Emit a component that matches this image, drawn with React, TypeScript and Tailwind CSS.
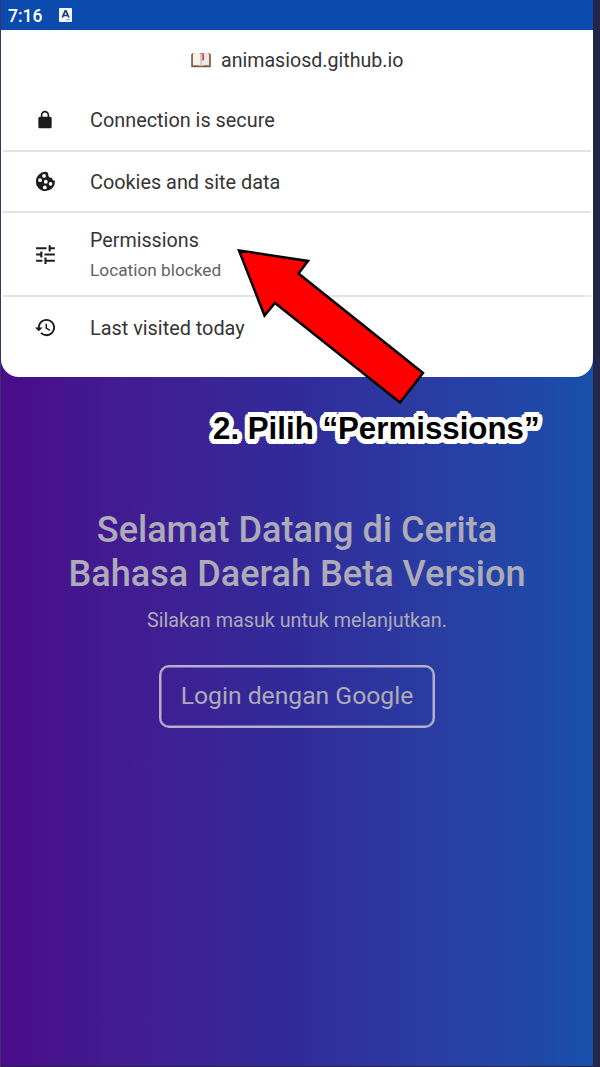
import type { ReactNode } from "react";

const LockIcon = () => (
  <svg viewBox="0 0 24 24" className="mr-[1px] h-[20px] w-[20px]" fill="#1c1c1c">
    <path d="M18 8h-1V6c0-2.76-2.24-5-5-5S7 3.24 7 6v2H6c-1.1 0-2 .9-2 2v10c0 1.1.9 2 2 2h12c1.1 0 2-.9 2-2V10c0-1.1-.9-2-2-2zM8.9 6c0-1.71 1.39-3.1 3.1-3.1s3.1 1.39 3.1 3.1v2H8.9V6z" />
  </svg>
);

const CookieIcon = () => (
  <svg viewBox="0 0 24 24" className="h-[23px] w-[23px]">
    <path
      fill="#1c1c1c"
      d="M21.9 11.2c-1.9.1-3.2-1.1-3-3-2.5.5-4.6-1.3-4-3.9C14.5 3.4 14 2.5 13.6 2.1A10 10 0 1 0 21.9 11.2z"
    />
    <g fill="#fff">
      <circle cx="10.5" cy="6.2" r="2" />
      <circle cx="6.3" cy="10.6" r="2" />
      <circle cx="12.3" cy="12.3" r="2" />
      <circle cx="17.3" cy="14.5" r="1.9" />
      <circle cx="11.3" cy="18.2" r="2" />
    </g>
  </svg>
);

const TuneIcon = () => (
  <svg viewBox="0 0 24 24" className="h-[25px] w-[25px]" fill="#1c1c1c">
    <path d="M3 17v2h6v-2H3zM3 5v2h10V5H3zm10 16v-2h8v-2h-8v-2h-2v6h2zM7 9v2H3v2h4v2h2V9H7zm14 4v-2H11v2h10zm-6-4h2V7h4V5h-4V3h-2v6z" />
  </svg>
);

const HistoryIcon = () => (
  <svg viewBox="0 0 24 24" className="h-[23px] w-[23px]" fill="#1c1c1c">
    <path d="M13 3c-4.970 0-9 4.030-9 9H1l3.890 3.890.07.14L9 12H6c0-3.870 3.130-7 7-7s7 3.130 7 7-3.130 7-7 7c-1.930 0-3.680-.79-4.940-2.060l-1.420 1.420C8.270 19.990 10.510 21 13 21c4.970 0 9-4.030 9-9s-4.030-9-9-9zm-1 5v5l4.280 2.540.72-1.210-3.500-2.080V8H12z" />
  </svg>
);

const BookIcon = () => (
  <svg viewBox="0 0 20 16" className="h-[16px] w-[20px]">
    <path d="M.2 2.2 2 1h16l1.800 1.200v13H.2z" fill="#7f5a3a" />
    <path d="M1.900 1.700C4.500.3 8 .6 10 2v12c-2.500-1-5.500-1-8.100-.4z" fill="#f5f1ec" />
    <path d="M18.100 1.700C15.500.3 12 .6 10 2v12c2.500-1 5.500-1 8.100-.4z" fill="#ece9ec" />
    <path d="M10 2v12" stroke="#a79f9a" strokeWidth=".8" />
    <path d="M11.200 1.500 13.100.9v7.600l-1-.6-.9 1.400z" fill="#dc4b55" />
  </svg>
);

const Row = ({ icon, className, children }: { icon: ReactNode; className: string; children: ReactNode }) => (
  <div className={`flex items-center ${className}`}>
    <div className="flex w-[89px] shrink-0 justify-center">{icon}</div>
    <div className="pt-[2px] text-[19.850px] leading-[26px] text-[#353535]">{children}</div>
  </div>
);

const Divider = () => <div className="mr-[2px] ml-[2px] h-[2px] shrink-0 bg-[#e3e3e3]" />;

export default function App() {
  return (
    <div className="relative flex h-[1067px] w-[600px] overflow-hidden border-l border-[#3d3268] bg-[#25254a] font-['Roboto',sans-serif]">
      <div className="flex h-[1066px] w-[592px] flex-col bg-linear-to-r from-[#4a0b8a] via-[#312b9a] to-[#174fab]">
        <header className="flex h-[30px] shrink-0 items-center bg-[#0a4bad] pl-[7px] text-white">
          <span className="w-[51px] pt-[2px] text-[17.500px] font-medium">7:16</span>
          <svg viewBox="0 0 13 14" className="h-[14px] w-[13px]">
            <rect width="13" height="14" rx="1" fill="#f3f7ff" />
            <path d="M3.300 9.500 6.200 2.800h.8l2.900 6.700M4.300 7.500h4.500" fill="none" stroke="#173e82" strokeWidth="1.700" />
            <path d="M7 11.700h4" stroke="#829bc5" strokeWidth="1" />
          </svg>
        </header>
        <section className="flex h-[347px] shrink-0 flex-col rounded-b-[18px] bg-white">
          <div className="flex h-[59px] shrink-0 items-center pl-[190px]">
            <BookIcon />
            <span className="ml-[10px] pt-[2px] text-[19.600px] text-[#353535]">animasiosd.github.io</span>
          </div>
          <Row className="h-[61px]" icon={<LockIcon />}>Connection is secure</Row>
          <Divider />
          <Row className="h-[59px]" icon={<CookieIcon />}>Cookies and site data</Row>
          <Divider />
          <Row className="h-[82px]" icon={<TuneIcon />}>
            <div className="text-[19.700px] leading-[30px]">Permissions</div>
            <div className="text-[17.250px] leading-[29px] text-[#626262]">Location blocked</div>
          </Row>
          <Divider />
          <Row className="h-[61px]" icon={<HistoryIcon />}>Last visited today</Row>
        </section>
        <main className="flex flex-col items-center pt-[131px] text-[#aeabb8]">
          <h1 className="text-center text-[36.100px] leading-[44px] font-medium whitespace-nowrap">
            Selamat Datang di Cerita
            <br />
            Bahasa Daerah Beta Version
          </h1>
          <p className="mt-[11px] text-[19.750px] leading-[28px]">Silakan masuk untuk melanjutkan.</p>
          <button className="mt-[30px] flex h-[63px] w-[276px] items-center justify-center rounded-[10px] border-2 border-[#b4b0c8] pb-[2px] text-[24.700px] shadow-[inset_0_0_0_0.500px_#b4b0c8]">
            Login dengan Google
          </button>
        </main>
      </div>
      <svg viewBox="0 0 200 164" className="absolute top-[244px] left-[231px] h-[164px] w-[200px]">
        <path
          d="M7 6.500 76 17 66.500 29.500 191 129 168 158.500 43 59 32.500 71.500Z"
          fill="#f00"
          stroke="#000"
          strokeWidth="2.500"
        />
      </svg>
      <div className="absolute top-[409px] left-[212px] font-['Liberation_Sans',sans-serif] text-[31.250px] leading-[40px] font-bold whitespace-nowrap text-black [text-shadow:5px_0_white,4.600px_1.900px_white,3.500px_3.500px_white,1.900px_4.600px_white,0_5px_white,-1.900px_4.600px_white,-3.500px_3.500px_white,-4.600px_1.900px_white,-5px_0_white,-4.600px_-1.900px_white,-3.500px_-3.500px_white,-1.900px_-4.600px_white,0_-5px_white,1.900px_-4.600px_white,3.500px_-3.500px_white,4.600px_-1.900px_white,2.500px_0_white,-2.500px_0_white,0_2.500px_white,0_-2.500px_white]">
        2. Pilih “Permissions”
      </div>
    </div>
  );
}
